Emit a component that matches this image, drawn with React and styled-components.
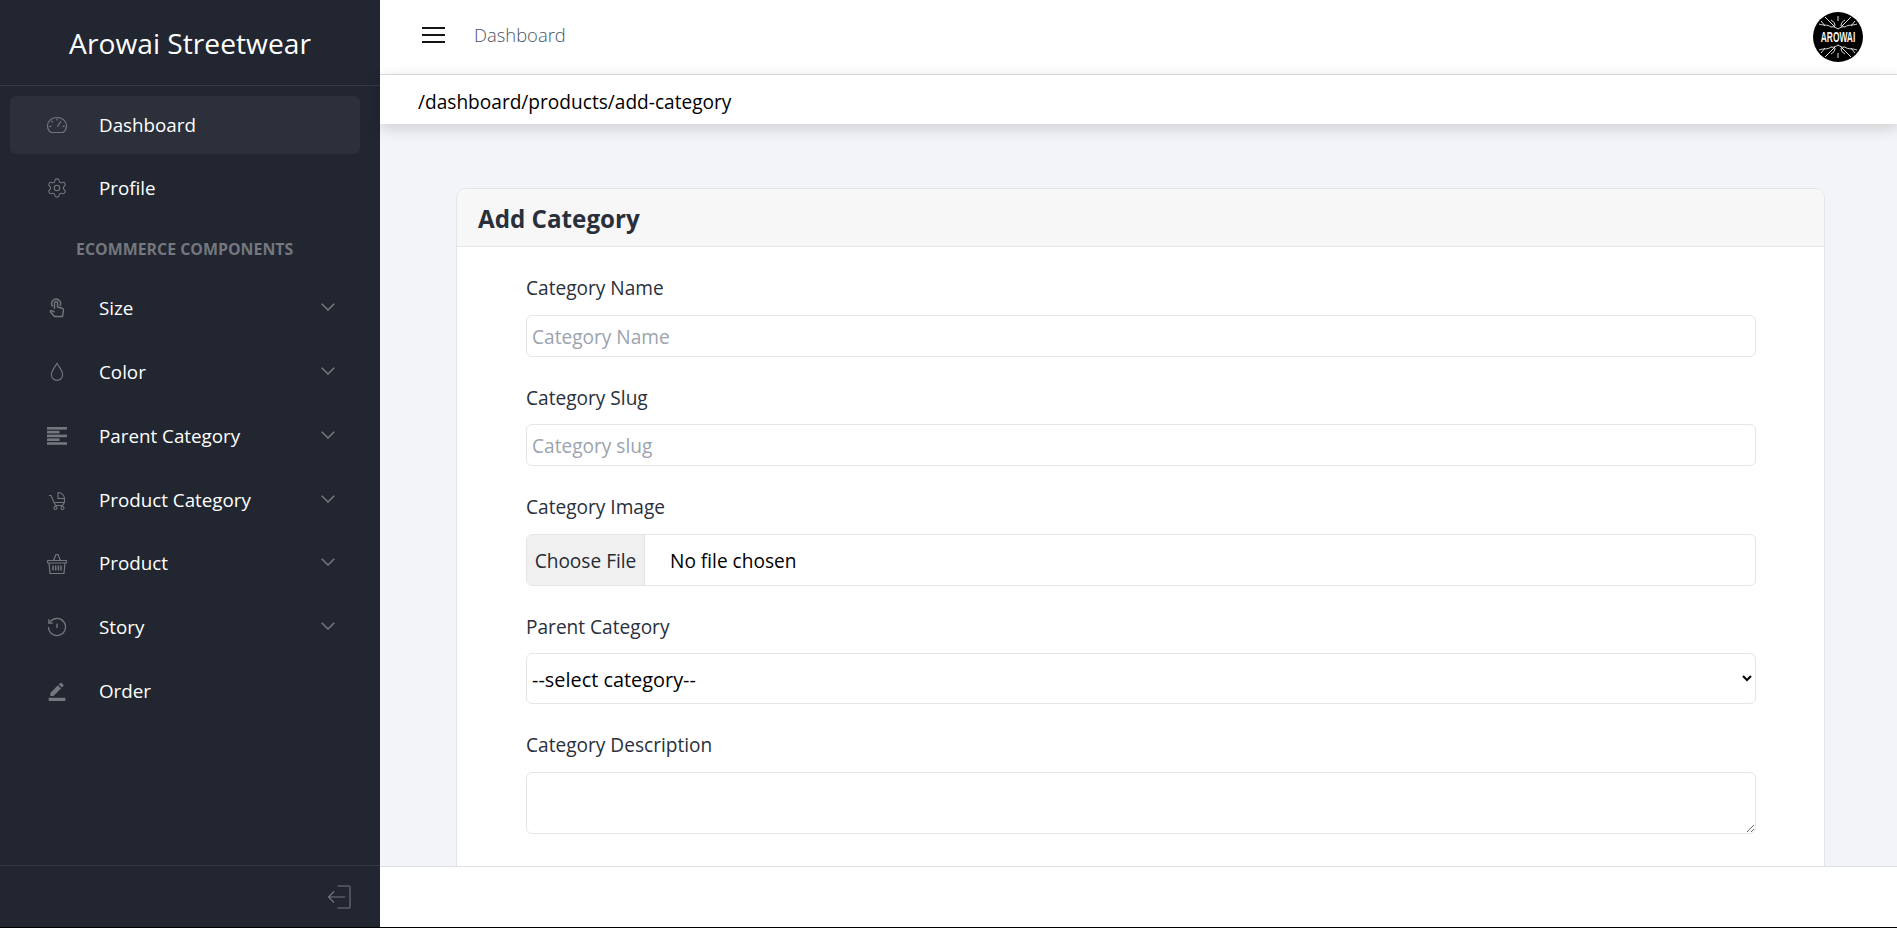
import React from 'react';
import styled, { createGlobalStyle } from 'styled-components';
import { Settings } from 'lucide-react';
import { MdBorderColor } from 'react-icons/md';

const GlobalStyle = createGlobalStyle`
  html, body {
    margin: 0;
    height: 100%;
    background: #000;
  }
  body {
    font-family: "Open Sans", "Noto Sans", sans-serif;
    font-size: 18.8px;
    overflow: hidden;
  }
  * {
    box-sizing: border-box;
  }
`;

const Page = styled.div`
  display: flex;
  height: 927px;
  background: #f3f4f7;
`;

const Sidebar = styled.aside`
  display: flex;
  flex-direction: column;
  flex: 0 0 380px;
  background: #212631;
  color: #fff;
`;

const Brand = styled.div`
  flex: 0 0 86px;
  display: flex;
  align-items: center;
  justify-content: center;
  font-size: 28.2px;
  border-bottom: 1px solid #343944;
`;

const Nav = styled.nav`
  flex: 1;
  padding: 10px 20px 0 10px;
`;

const NavRow = styled.div`
  display: flex;
  align-items: center;
  height: ${(p) => (p.$active ? '58px' : p.$compact ? '58px' : '63.75px')};
  margin-bottom: ${(p) => (p.$active ? '5px' : '0')};
  padding: 0 25px 0 37px;
  border-radius: 6px;
  background: ${(p) => (p.$active ? '#2b303b' : 'transparent')};
`;

const IconSlot = styled.span`
  display: flex;
  align-items: center;
  justify-content: center;
  width: 20px;
  height: 20px;
  margin-right: 32px;
  color: #74777d;

  svg {
    display: block;
    flex: none;
    overflow: visible;
  }
`;

const NavLabel = styled.span`
  flex: 1;
`;

const Chevron = styled.svg`
  width: 14px;
  height: 8px;
  margin-top: -2px;
  fill: none;
  stroke: #74777d;
  stroke-width: 1.5;
`;

const SectionTitle = styled.div`
  height: 59.5px;
  padding: 21px 0 0 66px;
  font-size: 15.9px;
  font-weight: 700;
  line-height: 22px;
  text-transform: uppercase;
  color: #74777d;
`;

const SidebarFooter = styled.div`
  flex: 0 0 62px;
  display: flex;
  align-items: center;
  justify-content: flex-end;
  padding-right: 29px;
  border-top: 1px solid #343944;
  color: #74777d;
`;

const Main = styled.div`
  flex: 1;
  display: flex;
  flex-direction: column;
  min-width: 0;
`;

const Header = styled.header`
  flex: 0 0 75px;
  display: flex;
  align-items: center;
  padding: 0 34px 0 42px;
  background: #fff;
  border-bottom: 1px solid #dbdfe6;
`;

const MenuIcon = styled.svg`
  width: 23px;
  height: 16px;
  margin: 0 29px 4px 0;
  fill: #151515;
`;

const HeaderLink = styled.span`
  margin: 0 auto 5px 0;
  font-size: 18.4px;
  font-weight: 300;
  color: #4b5563;
`;

const Subheader = styled.div`
  position: relative;
  z-index: 1;
  flex: 0 0 49px;
  display: flex;
  align-items: center;
  padding: 4px 0 0 38px;
  font-size: 19.1px;
  background: #fff;
  color: #000;
  box-shadow: 0 4px 14px rgba(8, 10, 12, 0.16);
`;

const Content = styled.main`
  flex: 1;
  min-height: 0;
  overflow: hidden;
  padding: 64px 72.5px 0 76px;
`;

const Card = styled.section`
  background: #fff;
  border: 1px solid #e3e5ea;
  border-radius: 10px;
`;

const CardHeader = styled.div`
  display: flex;
  align-items: center;
  height: 58px;
  padding: 2px 0 0 21px;
  background: #f7f7f8;
  border-bottom: 1px solid #e3e5ea;
  border-radius: 10px 10px 0 0;
`;

const CardTitle = styled.h2`
  margin: 0;
  font-size: 24.2px;
  font-weight: 700;
  color: #2a303b;
`;

const CardBody = styled.form`
  padding: 26px 67.5px 40px 69px;
  font-size: 19.1px;
`;

const Field = styled.div`
  margin-bottom: 26px;
`;

const Label = styled.label`
  display: block;
  margin-bottom: 11.5px;
  line-height: 30px;
  color: #2a303b;
`;

const TextInput = styled.input`
  display: block;
  width: 100%;
  height: 42px;
  padding: 2px 5px 0;
  font: inherit;
  color: #000;
  background: #fff;
  border: 1px solid #e3e5ea;
  border-radius: 6px;

  &::placeholder {
    color: #9ca3af;
  }
`;

const FileInput = styled.input`
  display: block;
  width: 100%;
  height: 52px;
  padding: 0;
  font: inherit;
  color: #000;
  background: #fff;
  border: 1px solid #e3e5ea;
  border-radius: 6px;
  overflow: hidden;

  &::file-selector-button {
    height: 100%;
    width: 118px;
    margin-right: 25px;
    padding: 2px 0 0;
    font: inherit;
    color: #252b36;
    background: #f0f0f0;
    border: 0;
    border-right: 1px solid #e3e5ea;
  }
`;

const Select = styled.select`
  display: block;
  width: 100%;
  height: 51px;
  padding: 2px 1px 0;
  font-family: inherit;
  font-size: 19.9px;
  color: #000;
  background: #fff;
  border: 1px solid #e3e5ea;
  border-radius: 6px;
`;

const TextArea = styled.textarea`
  display: block;
  width: 100%;
  height: 62px;
  font: inherit;
  background: #fff;
  border: 1px solid #e3e5ea;
  border-radius: 6px;
`;

const Footer = styled.footer`
  flex: 0 0 61px;
  background: #fff;
  border-top: 1px solid #dbdfe6;
`;

const SpeedIcon = () => (
  <svg width="20" height="20" viewBox="0 0 20 20" fill="none" stroke="currentColor" strokeWidth="1.2">
    <path d="M4 17.5C1.8 15.8.5 13.2.5 10.5a9.5 8 0 0 1 19 0c0 2.7-1.3 5.3-3.5 7Z" />
    <path d="M10 3.4v2M4.4 6l1.4 1.4M2.4 11.4h2M15.6 11.4h2M10.4 11.8 14 6.2" />
  </svg>
);

const TouchIcon = () => (
  <svg width="20" height="20" viewBox="0 0 20 20" fill="none" stroke="currentColor" strokeWidth="1.4">
    <path d="M5.8 8.5a4.4 4.4 0 1 1 7-.5" />
    <path d="M7.5 11V5a1.5 1.5 0 0 1 3 0v4l4.5 1.2c1 .3 1.6 1 1.5 2l-1 6.3h-8l-4-4.5c-.6-.8.3-1.8 1.2-1.3l2.8 1.3" />
  </svg>
);

const DropIcon = () => (
  <svg width="20" height="20" viewBox="0 0 20 20" fill="none" stroke="currentColor" strokeWidth="1.1">
    <path d="M10 1.2C8 5 4.4 8.5 4.4 12.8a5.6 5.6 0 0 0 11.2 0C15.6 8.5 12 5 10 1.2Z" />
  </svg>
);

const AlignIcon = () => (
  <svg width="20" height="20" viewBox="0 0 20 20" fill="currentColor">
    <rect y="1" width="20" height="2.6" />
    <rect y="4.8" width="12.5" height="2.6" />
    <rect y="8.6" width="20" height="2.6" />
    <rect y="12.4" width="12.5" height="2.6" />
    <rect y="16.2" width="20" height="2.6" />
  </svg>
);

const CarriageIcon = () => (
  <svg width="20" height="20" viewBox="0 0 20 20" fill="none" stroke="currentColor" strokeWidth="1.1">
    <path d="M2 5.5h2l3 7h10.5M7 12.5l1.5 3h7l2-3" />
    <path d="M11 2.5a6.5 6.5 0 0 1 6.5 7.5v2.5M11 2.5v6h6.5" />
    <circle cx="8.5" cy="18" r="1.5" />
    <circle cx="15.5" cy="18" r="1.5" />
  </svg>
);

const BasketIcon = () => (
  <svg width="20" height="20" viewBox="0 0 20 20" fill="none" stroke="currentColor" strokeWidth="1.2">
    <path d="M6.5 7.5 9 1.5h2l2.5 6" />
    <rect x=".5" y="7.5" width="19" height="2.5" rx=".8" />
    <path d="M2 10l1 10.5h14l1-10.5" />
    <path strokeWidth="1.5" d="M6 12.5v5M8.7 12.5v5M11.4 12.5v5M14 12.5v5" />
  </svg>
);

const HistoryIcon = () => (
  <svg width="20" height="20" viewBox="0 0 20 20" fill="none" stroke="currentColor" strokeWidth="1.3">
    <path d="M2.6 5.8A8.5 8.5 0 1 1 1.5 10" />
    <path d="M1.8 2.3v3.9h4M10 6.5V11" />
  </svg>
);

const LogoutIcon = () => (
  <svg width="24" height="24" viewBox="0 0 24 24" fill="none" stroke="currentColor" strokeWidth="1.1">
    <path d="M10.5 1H22a1 1 0 0 1 1 1v20a1 1 0 0 1-1 1H10.5" />
    <path d="M18 12H1.5M7 6.5 1.5 12 7 17.5" />
  </svg>
);

const Logo = () => (
  <svg width="50" height="50" viewBox="0 0 50 50">
    <circle cx="25" cy="25" r="25" fill="#000" />
    <g fill="none" stroke="#e0e0e0" strokeWidth="1">
      <path d="M6 12c5 2 8 0 12 3 3-1 5 1 7 2 2-1 4-3 7-2 4-3 7-1 12-3M12 5l10 10M38 5 28 15M18 8c2 1 4 3 4 6M32 8c-2 1-4 3-4 6M8 9l4 5M42 9l-4 5M25 4v5" />
      <path d="M6 38c5-2 8 0 12-3 3 1 5-1 7-2 2 1 4 3 7 2 4 3 7 1 12 3M12 45l10-10M38 45 28 35M18 42c2-1 4-3 4-6M32 42c-2-1-4-3-4-6M8 41l4-5M42 41l-4-5M25 46v-5" />
    </g>
    <text transform="translate(25 29.5) scale(1 1.8)" textAnchor="middle" fontFamily="Liberation Sans" fontWeight="700" fontSize="8.4" fill="#f4f4f4">AROWAI</text>
  </svg>
);

const navTop = [
  { label: 'Dashboard', icon: <SpeedIcon />, active: true },
  { label: 'Profile', icon: <Settings size={22} strokeWidth={1.2} />, compact: true },
];

const navBottom = [
  { label: 'Size', icon: <TouchIcon />, more: true },
  { label: 'Color', icon: <DropIcon />, more: true },
  { label: 'Parent Category', icon: <AlignIcon />, more: true },
  { label: 'Product Category', icon: <CarriageIcon />, more: true },
  { label: 'Product', icon: <BasketIcon />, more: true },
  { label: 'Story', icon: <HistoryIcon />, more: true },
  { label: 'Order', icon: <MdBorderColor size={20} /> },
];

function NavItem({ item }) {
  return (
    <NavRow $active={item.active} $compact={item.compact}>
      <IconSlot>{item.icon}</IconSlot>
      <NavLabel>{item.label}</NavLabel>
      {item.more && (
        <Chevron viewBox="0 0 14 8">
          <path d="M.7.7 7 7 13.3.7" />
        </Chevron>
      )}
    </NavRow>
  );
}

export default function App() {
  return (
    <>
      <GlobalStyle />
      <Page>
        <Sidebar>
          <Brand>Arowai Streetwear</Brand>
          <Nav>
            {navTop.map((item) => <NavItem key={item.label} item={item} />)}
            <SectionTitle>Ecommerce Components</SectionTitle>
            {navBottom.map((item) => <NavItem key={item.label} item={item} />)}
          </Nav>
          <SidebarFooter><LogoutIcon /></SidebarFooter>
        </Sidebar>
        <Main>
          <Header>
            <MenuIcon viewBox="0 0 23 16">
              <rect y="0" width="23" height="2" />
              <rect y="7" width="23" height="2" />
              <rect y="14" width="23" height="2" />
            </MenuIcon>
            <HeaderLink>Dashboard</HeaderLink>
            <Logo />
          </Header>
          <Subheader>/dashboard/products/add-category</Subheader>
          <Content>
            <Card>
              <CardHeader>
                <CardTitle>Add Category</CardTitle>
              </CardHeader>
              <CardBody>
                <Field>
                  <Label>Category Name</Label>
                  <TextInput placeholder="Category Name" />
                </Field>
                <Field>
                  <Label>Category Slug</Label>
                  <TextInput placeholder="Category slug" />
                </Field>
                <Field>
                  <Label>Category Image</Label>
                  <FileInput type="file" />
                </Field>
                <Field>
                  <Label>Parent Category</Label>
                  <Select defaultValue="">
                    <option value="">--select category--</option>
                  </Select>
                </Field>
                <Field>
                  <Label>Category Description</Label>
                  <TextArea />
                </Field>
              </CardBody>
            </Card>
          </Content>
          <Footer />
        </Main>
      </Page>
    </>
  );
}
